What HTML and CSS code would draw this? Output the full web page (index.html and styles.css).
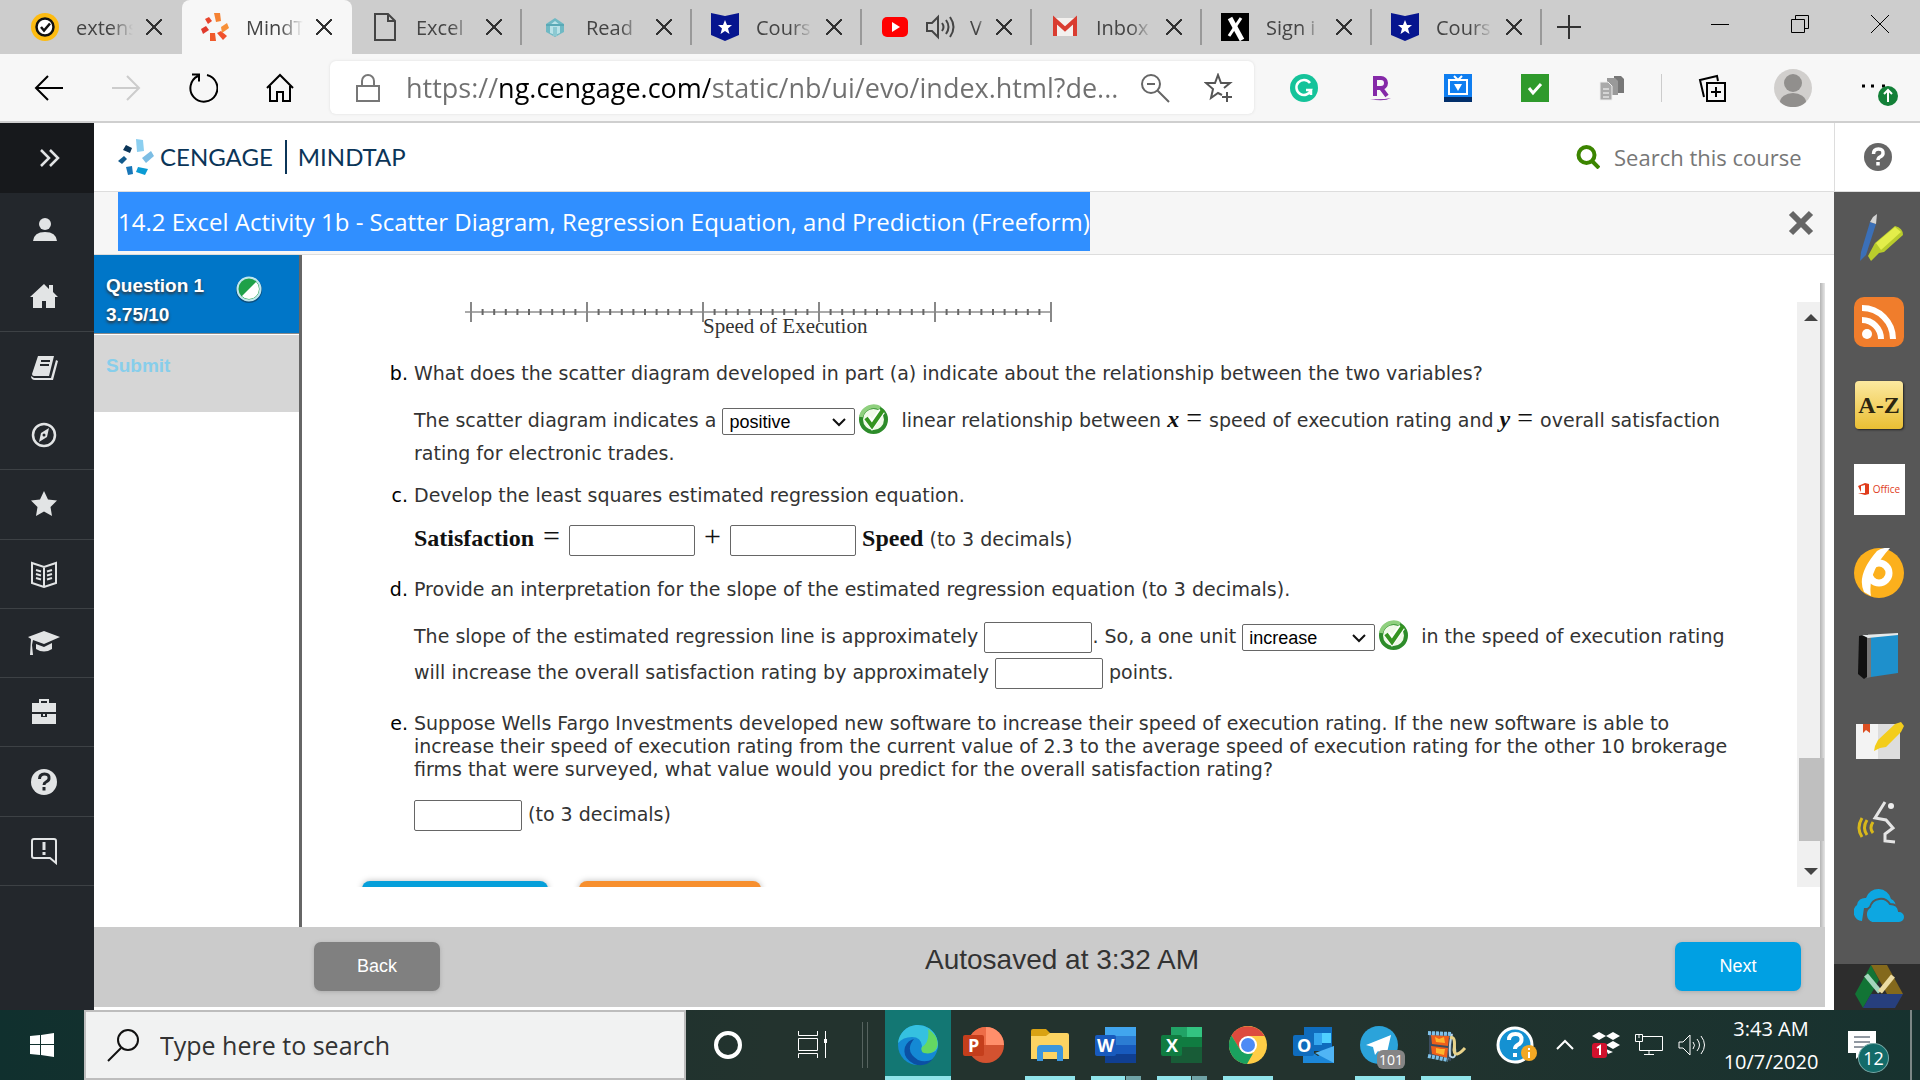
FILE: index.html
```
<!DOCTYPE html>
<html lang="en">

<head>
    <meta charset="utf-8">
    <meta name="viewport" content="width=device-width, initial-scale=1.0">
    <title>MindTap - Cengage Learning</title>
    <link rel="stylesheet" href="styles.css">
</head>

<body>
    <!-- browser tabs -->
    <div class="tabs">
        <div class="tab">
            <svg class="fav" viewBox="0 0 28 28"><circle cx="14" cy="14" r="14" fill="#fdbb11"/><circle cx="14" cy="14" r="8.500" fill="#fff" stroke="#111" stroke-width="2.500"/><path d="M10 14l3 3.500 6-7" fill="none" stroke="#111" stroke-width="2.500"/></svg>
            <span class="name">extens</span><button class="close" aria-label="Close tab"></button>
        </div>
        <div class="tab cur">
            <svg class="fav" viewBox="0 0 28 28"><path fill="#f58233" d="M13 0l6 0 1 8-5 1z"/><path fill="#e8442c" d="M4 6l4-2 3 4-4 3z"/><path fill="#e03a2c" d="M0 16l5-3 3 4-6 4z"/><path fill="#f05a2c" d="M9 20l5 0 1 8-6 0z"/><path fill="#f0502c" d="M16 20l4-2 6 5-4 4z"/><path fill="#f79038" d="M20 14l6-4 2 5-7 5z"/></svg>
            <span class="name">MindT</span><button class="close" aria-label="Close tab"></button>
        </div>
        <div class="tab">
            <svg class="fav" viewBox="0 0 28 28"><path d="M4 1h13l7 7v19H4zM17 1v7h7" fill="none" stroke="#444" stroke-width="2"/></svg>
            <span class="name">Excel</span><button class="close" aria-label="Close tab"></button>
        </div>
        <div class="tab">
            <svg class="fav" viewBox="0 0 28 28"><path fill="#6fb9c4" d="M14 5l9 6v8l-9 5-9-5v-8z"/><path fill="#b9e2e8" d="M14 8l5 4v8l-5 2-5-2v-8z"/><path d="M5 12h18" stroke="#5aa9b6" stroke-width="2"/><path fill="#8cc9d2" d="M12 14h4v9h-4z"/></svg>
            <span class="name">Read</span><button class="close" aria-label="Close tab"></button>
        </div>
        <div class="tab">
            <svg class="fav" viewBox="0 0 28 28"><path fill="#06158f" d="M0 0l14 3 14-3v22l-14 6-14-6z"/><path fill="#fff" d="M14 7l2 5h5l-4 3.500 1.500 5.500-4.500-3-4.500 3 1.500-5.500-4-3.500h5z"/></svg>
            <span class="name">Cours</span><button class="close" aria-label="Close tab"></button>
        </div>
        <div class="tab">
            <svg class="fav" viewBox="0 0 28 28"><rect x="1" y="4" width="26" height="20" rx="5" fill="#f00"/><path fill="#fff" d="M11 9l8 5-8 5z"/></svg>
            <svg class="sound" viewBox="0 0 32 28"><path d="M3 10h5l6-6v20l-6-6H3zM18 10q3 4 0 8M22 7q5 7 0 14M26 4q7 10 0 20" fill="none" stroke="#444" stroke-width="2"/></svg>
            <span class="name short">V</span><button class="close" aria-label="Close tab"></button>
        </div>
        <div class="tab">
            <svg class="fav" viewBox="0 0 28 28"><rect x="2" y="5" width="24" height="18" rx="2" fill="#f3f0ee"/><path d="M4 23V7l10 9L24 7v16" fill="none" stroke="#d93c30" stroke-width="4"/></svg>
            <span class="name">Inbox</span><button class="close" aria-label="Close tab"></button>
        </div>
        <div class="tab">
            <svg class="fav" viewBox="0 0 28 28"><path fill="#000" d="M0 0h28v28H0z"/><path d="M9 5l12 22" stroke="#fff" stroke-width="5"/><path d="M20 5L8 23" stroke="#fff" stroke-width="3"/></svg>
            <span class="name">Sign i</span><button class="close" aria-label="Close tab"></button>
        </div>
        <div class="tab">
            <svg class="fav" viewBox="0 0 28 28"><path fill="#06158f" d="M0 0l14 3 14-3v22l-14 6-14-6z"/><path fill="#fff" d="M14 7l2 5h5l-4 3.500 1.500 5.500-4.500-3-4.500 3 1.500-5.500-4-3.500h5z"/></svg>
            <span class="name">Cours</span><button class="close" aria-label="Close tab"></button>
        </div>
        <button class="plus" aria-label="New tab"><svg width="24" height="24" viewBox="0 0 24 24"><path d="M12 0v24M0 12h24" stroke="#333" stroke-width="2"/></svg></button>
        <div class="win">
            <button aria-label="Minimize"><svg width="20" height="20" viewBox="0 0 20 20"><path d="M1 10.500h18" stroke="#000"/></svg></button>
            <button aria-label="Restore"><svg width="20" height="20" viewBox="0 0 20 20"><path d="M1.500 5.500h13v13h-13zM5.500 5V1.500h13v13H15" fill="none" stroke="#000"/></svg></button>
            <button aria-label="Close"><svg width="20" height="20" viewBox="0 0 20 20"><path d="M1 1l18 18M19 1L1 19" stroke="#000"/></svg></button>
        </div>
    </div>

    <!-- address bar -->
    <div class="toolbar">
        <div class="navs">
            <button aria-label="Back"><svg width="30" height="30" viewBox="0 0 30 30"><path d="M29 15H2M14 3L2 15l12 12" fill="none" stroke="#000" stroke-width="2"/></svg></button>
            <button aria-label="Forward"><svg width="30" height="30" viewBox="0 0 30 30"><path d="M1 15h27M16 3l12 12-12 12" fill="none" stroke="#ccc" stroke-width="2"/></svg></button>
            <button aria-label="Refresh"><svg width="30" height="30" viewBox="0 0 30 30"><path d="M19 2a13.500 13.500 0 1 1-9 1M4 1.500h7v7" fill="none" stroke="#000" stroke-width="2"/></svg></button>
            <button aria-label="Home"><svg width="30" height="30" viewBox="0 0 30 30"><path d="M2 15L15 2l13 13M5 13v15h7v-9h6v9h7V13" fill="none" stroke="#000" stroke-width="2"/></svg></button>
        </div>
        <div class="address">
            <svg width="26" height="30" viewBox="0 0 26 30"><path d="M2 13h22v15H2zM7 13V8a6 6 0 0 1 12 0v5" fill="none" stroke="#777" stroke-width="2"/></svg>
            <input class="url" type="text" aria-label="Address" value="https://ng.cengage.com/static/nb/ui/evo/index.html?de...">
            <svg width="30" height="30" viewBox="0 0 30 30"><circle cx="11" cy="11" r="9" fill="none" stroke="#666" stroke-width="2"/><path d="M17 17l12 12M7 11h8" stroke="#666" stroke-width="2"/></svg>
            <svg width="30" height="30" viewBox="0 0 30 30"><path d="M18 22l-4-2-7 5 2-9-7-6h9l3-8 3 8h9l-6 5M18 24h10M23 19v10" fill="none" stroke="#555" stroke-width="2"/></svg>
        </div>
        <div class="exts">
            <svg viewBox="0 0 28 28"><circle cx="14" cy="14" r="14" fill="#15c39a"/><path d="M20 9a7.500 7.500 0 1 0 1 7h-5M21 21v-5" fill="none" stroke="#fff" stroke-width="2.500"/></svg>
            <svg viewBox="0 0 28 28"><path d="M8 22V4h6a5 5 0 0 1 0 10H8M14 14l6 8" fill="none" stroke="#8529a8" stroke-width="4"/><path fill="#8529a8" d="M3 25q12 1 21-1-7 4-21 1z"/></svg>
            <svg viewBox="0 0 28 28"><path fill="#0f7ef0" d="M0 0h28v28H0z"/><path fill="#022f6b" d="M0 23h28v5H0z"/><path d="M5 6h18v14H5zM10 2l4 4 4-4" fill="none" stroke="#fff" stroke-width="2"/><path fill="#fff" d="M10 10h8l-4 7z"/></svg>
            <svg viewBox="0 0 28 28"><path fill="#2f9a2c" d="M0 0h28v28H0z"/><path d="M8 14l4 5 8-9" fill="none" stroke="#fff" stroke-width="3"/></svg>
            <svg viewBox="0 0 28 28"><path fill="#777" d="M16 2h7l3 3v14H16z"/><path fill="#999" d="M9 4h8l3 3v14H9z"/><path fill="#aaa" stroke="#eee" d="M2 8h8l4 4v14H2z"/><path d="M5 15h6M5 19h6M5 23h6" stroke="#fff"/></svg>
        </div>
        <div class="more">
            <svg width="28" height="28" viewBox="0 0 28 28"><path d="M9 9h18v18H9zM18 13v10M13 18h10M6 23L2 6l17-4 1 5" fill="none" stroke="#000" stroke-width="2"/></svg>
            <svg width="38" height="38" viewBox="0 0 38 38"><circle cx="19" cy="19" r="19" fill="#d1cfcd"/><circle cx="19" cy="14" r="9" fill="#918f8d"/><path fill="#918f8d" d="M6 33a13 9 0 0 1 26 0 19 19 0 0 1-26 0z"/></svg>
            <svg width="38" height="38" viewBox="0 0 38 38"><path d="M2 17h3M11 17h3M22 17h3" stroke="#000" stroke-width="3"/><circle cx="28" cy="27" r="10" fill="#138038"/><path d="M28 33V21M24 25l4-4 4 4" fill="none" stroke="#fff" stroke-width="2"/></svg>
        </div>
    </div>

    <!-- course page -->
    <div class="page">
        <div class="side">
            <button class="open" aria-label="Expand"><svg width="24" height="20" viewBox="0 0 24 20"><path d="M3 2l8 8-8 8M12 2l8 8-8 8" fill="none" stroke="#e2e4e5" stroke-width="2.500"/></svg></button>
            <ul>
                <li class="pair"><svg viewBox="0 0 28 28"><circle cx="15" cy="8" r="6"/><path d="M3 25q1-9 12-9t12 9z"/></svg></li>
                <li><svg viewBox="0 0 28 28"><path d="M0 15L14 2l5 5V3h4v7l5 5h-3v11h-9v-7h-4v7H3V15z"/></svg></li>
                <li class="pair"><svg viewBox="0 0 28 28"><path d="M8 2h16l-5 20H4q-2 0-2-2zM26 6l2 1-5 19H5q-4 0-4-4l3 2h17z"/><path d="M11 7h9M10 11h9" stroke="#23272c" stroke-width="2"/></svg></li>
                <li><svg viewBox="0 0 28 28"><circle cx="14" cy="14" r="11" fill="none" stroke="#e2e4e5" stroke-width="2.500"/><path fill-rule="evenodd" d="M19 7l-2 9-8 5 2-9zM14 12.500a1.500 1.500 0 1 0 0 3 1.500 1.500 0 0 0 0-3z"/></svg></li>
                <li><svg viewBox="0 0 28 28"><path d="M14 1l4 8.500 9 1-6.500 6.500 1.500 9-8-4.500-8 4.500 1.500-9L1 10.500l9-1z"/></svg></li>
                <li><svg viewBox="0 0 28 28"><path d="M2 3l12 4 12-4v20l-12 4-12-4zM14 7v20M6 10l5 1.500M6 14l5 1.500M6 18l5 1.500M22 10l-5 1.500M22 14l-5 1.500M22 18l-5 1.500" fill="none" stroke="#e2e4e5" stroke-width="2"/></svg></li>
                <li><svg viewBox="0 0 34 28"><path d="M17 2l16 6-16 7-11-4-1 5 1 10H3l1-16-3-2zM9 15l8 3 8-4v6q-8 5-16 0z"/></svg></li>
                <li><svg viewBox="0 0 28 28"><path fill-rule="evenodd" d="M9 5V1h10v4h7v9H2V5zm2 0h6V3h-6zM2 16h9v3h6v-3h9v10H2zM13 16h2v2h-2z"/></svg></li>
                <li><svg viewBox="0 0 28 28"><circle cx="14" cy="14" r="13"/><path d="M9.500 11q0-5 5-5t4.500 4.500q0 2-3 3.500-2 1-2 3M14 19v3.500" fill="none" stroke="#23272c" stroke-width="3"/></svg></li>
                <li><svg viewBox="0 0 28 28"><path d="M4 2h20q2 0 2 2v22l-6-5H4q-2 0-2-2V4q0-2 2-2z" fill="none" stroke="#e2e4e5" stroke-width="2"/><path d="M12.500 5h3v8h-3zM12.500 15h3v3h-3z"/></svg></li>
            </ul>
        </div>

        <div class="main">
            <div class="head">
                <svg class="logo" viewBox="0 0 36 36"><path fill="#8ccff0" d="M18 0l7 1 1 11-7 1z"/><path fill="#7cbde4" d="M33 12l3 5-8 7-4-5z"/><path fill="#0a9bd4" d="M20 28l10 2-3 6-9-3z"/><path fill="#1976b8" d="M8 28l6-1 1 8-5 1z"/><path fill="#125a8c" d="M0 22l6-5 3 3-5 5z"/><path fill="#0b3558" d="M8 6l6 3-2 5-7-3z"/></svg>
                <span class="brand">CENGAGE</span><span class="brand product">MINDTAP</span>
                <label class="find">
                    <svg width="24" height="24" viewBox="0 0 24 24"><circle cx="10.500" cy="10" r="8" fill="none" stroke="#3c8500" stroke-width="4"/><path d="M16 16l7 7" stroke="#3c8500" stroke-width="4"/></svg>
                    <input type="text" placeholder="Search this course" aria-label="Search this course">
                </label>
            </div>
            <div class="title">
                <h1>14.2 Excel Activity 1b - Scatter Diagram, Regression Equation, and Prediction (Freeform)</h1>
                <button aria-label="Close activity"><svg width="26" height="26" viewBox="0 0 26 26"><path d="M3 3l20 20M23 3L3 23" stroke="#666" stroke-width="6"/></svg></button>
            </div>
            <div class="work">
                <div class="questions">
                    <div class="q cur"><span>Question 1<br>3.75/10</span><svg width="28" height="28" viewBox="0 0 28 28"><circle cx="14" cy="15" r="13" fill="#0a4f80"/><circle cx="14" cy="14" r="12" fill="#fff"/><path fill="#1fa149" d="M6 22A11.300 11.300 0 1 1 22 6z"/><circle cx="14" cy="14" r="10.500" fill="none" stroke="#1fa149"/><circle cx="14" cy="14" r="11.500" fill="none" stroke="#bfe6ee" stroke-width="2"/></svg></div>
                    <div class="q">Submit</div>
                </div>
                <div class="frame">
                    <div class="scroller">
                        <div class="content">
                            <svg class="axis" viewBox="0 0 590 42" width="590" height="42">
                                <path d="M0 10h586" stroke="#aaa" stroke-width="2"/>
                                <path d="M5 10h580" stroke="#666" stroke-width="6" stroke-dasharray="2 9.600"/>
                                <path d="M6 0v20M122 0v20M238 0v20M354 0v20M470 0v20M586 0v20" stroke="#888" stroke-width="2"/>
                                <text x="238" y="31">Speed of Execution</text>
                            </svg>
                            <ol start="2">
                                <li>
                                    <p>What does the scatter diagram developed in part (a) indicate about the relationship between the two variables?</p>
                                    <p class="fill">The scatter diagram indicates a <select aria-label="Relationship"><option>positive</option><option>negative</option></select><svg class="ok" viewBox="0 0 31 31"><circle cx="15.500" cy="15.500" r="12.500" fill="#f0fae8" stroke="#2d8c2a" stroke-width="4"/><path d="M3 13A13 13 0 0 1 22 4" fill="none" stroke="#8fd07e" stroke-width="4"/><path d="M9 14l5 7L24 7" fill="none" stroke="#fff" stroke-width="7"/><path d="M8 14l6 8L25 6" fill="none" stroke="#34941f" stroke-width="4"/></svg> linear relationship between <i>x</i> <span class="eq">=</span> speed of execution rating and <i>y</i> <span class="eq">=</span> overall satisfaction rating for electronic trades.</p>
                                </li>
                                <li>
                                    <p>Develop the least squares estimated regression equation.</p>
                                    <p class="fill tight"><b>Satisfaction</b> <span class="eq">=</span> <input class="wide" type="text" aria-label="Intercept"> <span class="eq">+</span> <input class="wide" type="text" aria-label="Slope"> <b>Speed</b> (to 3 decimals)</p>
                                </li>
                                <li>
                                    <p>Provide an interpretation for the slope of the estimated regression equation (to 3 decimals).</p>
                                    <p class="fill loose">The slope of the estimated regression line is approximately <input type="text" aria-label="Slope value">. So, a one unit <select aria-label="Direction"><option>increase</option><option>decrease</option></select><svg class="ok" viewBox="0 0 31 31"><circle cx="15.500" cy="15.500" r="12.500" fill="#f0fae8" stroke="#2d8c2a" stroke-width="4"/><path d="M3 13A13 13 0 0 1 22 4" fill="none" stroke="#8fd07e" stroke-width="4"/><path d="M9 14l5 7L24 7" fill="none" stroke="#fff" stroke-width="7"/><path d="M8 14l6 8L25 6" fill="none" stroke="#34941f" stroke-width="4"/></svg> in the speed of execution rating will increase the overall satisfaction rating by approximately <input type="text" aria-label="Points"> points.</p>
                                </li>
                                <li>
                                    <p>Suppose Wells Fargo Investments developed new software to increase their speed of execution rating. If the new software is able to increase their speed of execution rating from the current value of 2.3 to the average speed of execution rating for the other 10 brokerage firms that were surveyed, what value would you predict for the overall satisfaction rating?</p>
                                    <p class="fill loose last"><input type="text" aria-label="Prediction"> (to 3 decimals)</p>
                                </li>
                            </ol>
                            <div class="actions"><button class="blue" aria-label="Hide feedback"></button><button class="orange" aria-label="Icon key"></button></div>
                        </div>
                        <div class="bar"><span class="up"></span><span class="thumb"></span><span class="down"></span></div>
                    </div>
                </div>
            </div>
            <div class="foot">
                <button class="back">Back</button>
                <span>Autosaved at 3:32 AM</span>
                <button class="next">Next</button>
            </div>
        </div>

        <div class="apps">
            <div class="help"><svg width="28" height="28" viewBox="0 0 28 28"><circle cx="14" cy="14" r="14" fill="#666"/><path d="M9.500 11q0-5 5-5t4.500 4.500q0 2-3 3.500-2 1-2 3M14 19v3.500" fill="none" stroke="#fff" stroke-width="3.500"/></svg></div>
            <ul>
                <li><svg viewBox="0 0 50 50"><path fill="#3b70b8" d="M16 9l6 2-10 31-6 6 1-9z"/><path fill="#d5d5d5" d="M19 4l4-3-1 10-6-2z"/><path fill="#b9cc2c" d="M21 30l20-17q8 2 8 9L30 39l-5 1-8 8-3-5z"/><path fill="#e3ee4a" d="M22 30l19-16 6 5-20 18z"/></svg></li>
                <li><svg viewBox="0 0 50 50"><rect width="50" height="50" rx="10" fill="#f07d2c"/><circle cx="13" cy="37" r="5" fill="#fff"/><path d="M8 23a19 19 0 0 1 19 19M8 11a31 31 0 0 1 31 31" fill="none" stroke="#fff" stroke-width="6"/></svg></li>
                <li><div class="az">A-Z</div></li>
                <li><div class="office"><svg width="12" height="12" viewBox="0 0 12 12"><path fill="#e03c1c" fill-rule="evenodd" d="M0 3l7-3 4 1v10l-4 1-7-2 7 0V2L3 3v6z"/></svg>Office</div></li>
                <li><svg viewBox="0 0 50 50"><circle cx="25" cy="25" r="25" fill="#fcb01c"/><path fill="#fff" d="M23 3Q2 27 10 44l7 4Q13 25 36 0q-7-1-13 3z"/><circle cx="25" cy="25" r="10" fill="none" stroke="#fff" stroke-width="7"/></svg></li>
                <li><svg viewBox="0 0 50 50"><path fill="#111" d="M5 4l9-2v42l-4 3-6-5z"/><path fill="#777" d="M13 5h4v40l-4 1z"/><path fill="#1e90cc" d="M17 5l27-3v39l-27 4z"/><path fill="#e5e9ea" d="M8 3l36-2v2L14 6z"/></svg></li>
                <li><svg viewBox="0 0 50 50"><path fill="#f3f3f3" d="M2 8h22v35H2z"/><path fill="#ddd" d="M24 8h22v35H24z"/><path fill="#dc4f22" d="M9 8h7v9l-4-3-3 3z"/><path fill="#f3cd1c" d="M41 8l6-2 3 4-3 6-15 15-6 1-6 3 1-5 3-6z"/></svg></li>
                <li><svg viewBox="0 0 50 50"><path d="M31 3L21 19l11 2 7 8-8 6v7l10 1" fill="none" stroke="#e5e5e5" stroke-width="3"/><circle cx="37" cy="7" r="3" fill="#eee"/><path d="M19 23q-4 6 0 11M13 21q-5 8 0 15M8 19q-6 10 0 19" fill="none" stroke="#d8b81b" stroke-width="3"/></svg></li>
                <li><svg viewBox="0 0 50 50"><path fill="#0da7e1" d="M8 38a9 9 0 0 1-5-16 8 8 0 0 1 9-7 13 13 0 0 1 25 1q5 2 5 9H10z"/><path fill="#0da7e1" stroke="#575757" stroke-width="2" d="M18 40a9 9 0 0 1-2-16 11 11 0 0 1 20-3q8 0 9 7a6 6 0 0 1 0 12z"/></svg></li>
                <li class="dark"><svg viewBox="0 0 50 44"><path fill="#127435" d="M17 0L1 29l8 14 16-28z"/><path fill="#84691c" d="M17 0h16l16 29H33z"/><path fill="#273f7d" d="M17 29h32l-8 14H9z"/><path d="M12 10l14 17" fill="none" stroke="#a5d5bd" stroke-width="5"/><path d="M26 27l13-16" stroke="#ecdca3" stroke-width="5"/></svg></li>
            </ul>
        </div>
    </div>

    <!-- taskbar -->
    <div class="taskbar">
        <button class="start" aria-label="Start"><svg width="24" height="24" viewBox="0 0 24 24"><path fill="#fff" d="M0 3l10-1v9H0zM11 2l13-2v11H11zM0 12h10v10L0 21zM11 12h13v12l-13-2z"/></svg></button>
        <label class="type">
            <svg width="34" height="34" viewBox="0 0 34 34"><circle cx="22" cy="12" r="10" fill="none" stroke="#111" stroke-width="2"/><path d="M15 20L2 33" stroke="#111" stroke-width="2"/></svg>
            <input type="text" placeholder="Type here to search" aria-label="Type here to search">
        </label>
        <div class="cell big"><svg width="30" height="30" viewBox="0 0 30 30"><circle cx="15" cy="15" r="12" fill="none" stroke="#fff" stroke-width="4"/></svg></div>
        <div class="cell big"><svg width="30" height="30" viewBox="0 0 30 30"><path d="M1.500 1v4.500h19V1M1.500 8.500h19v12h-19zM1.500 28v-4.500h19V28M28.500 1v27" fill="none" stroke="#fff"/><path fill="#fff" d="M27 9h3v4h-3z"/></svg></div>
        <div class="split"></div>
        <div class="cell on run"><svg width="42" height="42" viewBox="0 0 42 42"><circle cx="21" cy="21" r="20" fill="#1489d4"/><path fill="#35c1e0" d="M1 19A20 20 0 0 1 40 15q4 13-8 14-9 0-7-7-1-9-10-9-9 0-14 6z"/><path fill="#64d862" d="M31 5q12 8 9 18-3 8-13 6-4-2-2-6 8-5 6-18z"/><path fill="#0b50a4" d="M17 15q-10 12 4 21 8 3 15-1-8 9-19 5-12-6-9-17 3-7 9-8z"/></svg></div>
        <div class="cell"><svg width="42" height="42" viewBox="0 0 42 42"><circle cx="23" cy="21" r="18" fill="#d35230"/><path fill="#ff8f6b" d="M23 3a18 18 0 0 1 18 18H23z"/><path fill="#ed6c47" d="M23 3v18H5A18 18 0 0 1 23 3z"/><rect x="0" y="11" width="21" height="21" rx="2" fill="#c43e1c"/><text x="5" y="28">P</text></svg></div>
        <div class="cell run"><svg width="42" height="42" viewBox="0 0 42 42"><path fill="#d9a213" d="M2 7q0-2 2-2h13l4 4v6H2z"/><path fill="#fcd462" d="M2 12h15l4-3h17q2 0 2 2v24H2z"/><path fill="#3b96dd" d="M8 37V25q0-4 4-4h18q4 0 4 4v12h-6v-9H14v9z"/></svg></div>
        <div class="cell run many"><svg width="42" height="42" viewBox="0 0 42 42"><path fill="#41a5ee" d="M10 3h31v9H10z"/><path fill="#2b7cd3" d="M10 12h31v9H10z"/><path fill="#185abd" d="M10 21h31v9H10z"/><path fill="#103f91" d="M10 30h31v9H10z"/><rect x="0" y="11" width="21" height="21" rx="2" fill="#185abd"/><text x="2" y="28">W</text></svg></div>
        <div class="cell run many"><svg width="42" height="42" viewBox="0 0 42 42"><path fill="#21a366" d="M10 3h16v10H10z"/><path fill="#33c481" d="M26 3h15v10H26z"/><path fill="#107c41" d="M10 13h31v10H10z"/><path fill="#185c37" d="M10 23h31v16H10z"/><rect x="0" y="11" width="21" height="21" rx="2" fill="#107c41"/><text x="5" y="28">X</text></svg></div>
        <div class="cell run"><svg width="42" height="42" viewBox="0 0 42 42"><circle cx="21" cy="21" r="19" fill="#ffcd46"/><path fill="#dd4b3e" d="M4.500 11.500A19 19 0 0 1 37.500 12H21l-8 14z"/><path fill="#1aa15f" d="M4.500 11.500l8.500 14q4 5 13 4l-6 10.500A19 19 0 0 1 4.500 11.500z"/><circle cx="21" cy="21" r="9" fill="#fff"/><circle cx="21" cy="21" r="7" fill="#4c8bf5"/></svg></div>
        <div class="cell"><svg width="42" height="42" viewBox="0 0 42 42"><path fill="#0f6cbd" d="M11 3h28v24H11z"/><path fill="#35a7ef" d="M21 9h8v12h-8z"/><path fill="#4fd0ff" d="M29 9h9v10h-9z"/><path fill="#1c87d8" d="M10 22l15 10 16-10v17H10z"/><path fill="#50b5f5" d="M41 22v17L22 29z"/><rect x="0" y="11" width="21" height="21" rx="2" fill="#0f6cbd"/><text x="4" y="28">O</text></svg></div>
        <div class="cell run"><svg width="42" height="42" viewBox="0 0 42 42"><circle cx="20" cy="21" r="19" fill="#2ba3da"/><path fill="#fff" d="M7 21l25-10-5 22-8-6-3 4-2-8z"/></svg><span class="count">101</span></div>
        <div class="cell run"><svg width="42" height="42" viewBox="0 0 42 42"><path fill="#3b4c60" d="M4 8l24 1-2 28-22-5z"/><path fill="#ee5f1a" d="M6 11l18 1-1 10-16-2zM6 22l17 2-1 10-15-4z"/><path fill="#ffb52e" d="M10 13l4 2 5-2 1 6-9-1zM11 24l5 1 4 0-1 6-8-2z"/><path d="M3 9l23 1M3 32l20 4" stroke="#7fc1e8" stroke-width="4" stroke-dasharray="3 1"/><path d="M27 10q-3 10-2 22 8 6 4-14" fill="none" stroke="#bcd8ea" stroke-width="2"/><path d="M25 14q6-3 4 12 1 9 11-2" fill="none" stroke="#e9d38a" stroke-width="3"/></svg></div>
        <div class="tray">
            <svg width="42" height="40" viewBox="0 0 42 40"><circle cx="19" cy="20" r="17" fill="#1591d2" stroke="#fff" stroke-width="3"/><path d="M13 15q0-6 6.500-6t6 6q0 3-4 5-2.500 1.500-2.500 4M19 28v4" fill="none" stroke="#fff" stroke-width="4"/><circle cx="33" cy="28" r="8" fill="#f3a823"/><path d="M33 23v2M33 27v6" stroke="#fff" stroke-width="2"/></svg>
            <svg width="24" height="12" viewBox="0 0 24 12"><path d="M4 10l8-8 8 8" fill="none" stroke="#fff" stroke-width="2"/></svg>
            <svg width="28" height="28" viewBox="0 0 28 28"><path fill="#fff" d="M7 1l7 4-7 4-7-4zM21 1l7 4-7 4-7-4zM21 10l7 4-7 4-7-4zM14 18l7 3-5 2z"/><rect y="12" width="15" height="15" rx="3" fill="#d1112d"/><path d="M5 17l3-2v9" fill="none" stroke="#fff" stroke-width="2"/></svg>
            <svg width="28" height="24" viewBox="0 0 28 24"><path d="M7.500 3.500h20v14h-23V9M14 17v4M9 21.500h10M.5 1.500h7v7h-7zM4 2v3" fill="none" stroke="#fff"/></svg>
            <svg width="28" height="24" viewBox="0 0 28 24"><path d="M1 9h4l7-7v20l-7-7H1zM15 9q3 3 0 7M19 6q5 6 0 12M23 3q7 9 0 18" fill="none" stroke="#fff"/></svg>
            <div class="clock">3:43 AM<br>10/7/2020</div>
            <div class="notes"><svg width="28" height="28" viewBox="0 0 28 28"><path fill="#fff" d="M0 0h28v22H14l-6 6v-6H0z"/><path d="M6 6h16M6 11h16M6 16h10" stroke="#234" stroke-width="1"/></svg><span>12</span></div>
        </div>
    </div>
</body>

</html>
```
FILE: styles.css
```
* {
    padding: 0;
    margin: 0;
    box-sizing: border-box;
    list-style: none;
}

body {
    display: flex;
    flex-direction: column;
    height: 100vh;
    overflow: hidden;
    font-family: "Open Sans", "Noto Sans", sans-serif;
    background: #fff;
}

button {
    border: 0;
    background: none;
}

input,
button,
select {
    font-family: inherit;
}

svg {
    display: block;
    flex: none;
}

/* tabs */
.tabs {
    display: flex;
    height: 54px;
    padding-left: 12px;
    background: #cdcdcd;
}

.tab {
    display: flex;
    align-items: center;
    width: 170px;
    padding: 0 18px 0 19px;
    border-right: 2px solid #999;
    border-image: linear-gradient(transparent 10px, #999 10px, #999 44px, transparent 44px) 1;
}

.tab:first-child {
    border-color: transparent;
    border-image: none;
}

.tab.cur {
    background: #f7f7f7;
    padding-right: 20px;
    border: 0;
    border-radius: 8px 8px 0 0;
}

.fav {
    width: 28px;
    height: 28px;
}

.sound {
    width: 32px;
    height: 28px;
    margin-left: 15px;
}

.name {
    flex: 1;
    min-width: 0;
    margin: 0 13px 0 17px;
    white-space: nowrap;
    font-size: 20px;
    color: #444;
    -webkit-mask-image: linear-gradient(90deg, #000 60%, transparent);
    mask-image: linear-gradient(90deg, #000 60%, transparent);
}

.name.short {
    margin-left: 14px;
    margin-right: 12px;
}

.close {
    width: 16px;
    height: 16px;
    background: linear-gradient(45deg, transparent 46%, #333 46%, #333 54%, transparent 54%), linear-gradient(-45deg, transparent 46%, #333 46%, #333 54%, transparent 54%);
}

.plus {
    width: 54px;
    display: flex;
    align-items: center;
    justify-content: center;
}

.win {
    display: flex;
    margin-left: auto;
    height: 48px;
}

.win button {
    display: flex;
    align-items: center;
    justify-content: center;
    width: 80px;
}

/* toolbar */
.toolbar {
    display: flex;
    align-items: center;
    height: 69px;
    background: #f7f7f7;
    border-bottom: 2px solid #cfcfcf;
}

.navs {
    display: flex;
    gap: 47px;
    padding-left: 34px;
}

.address {
    display: flex;
    align-items: center;
    flex: 1;
    gap: 34px;
    height: 53px;
    margin-left: 35px;
    padding: 0 20px 0 25px;
    background: #fff;
    border-radius: 6px;
    box-shadow: 0 0 3px #ddd;
}

.url {
    flex: 1;
    min-width: 0;
    border: 0;
    margin: 0 -16px 0 -9px;
    font-size: 27px;
    color: transparent;
    background: linear-gradient(90deg, #707070 94px, #000 94px, #000 304px, #707070 304px);
    -webkit-background-clip: text;
    background-clip: text;
}

.exts {
    display: flex;
    gap: 49px;
    padding: 0 35px 0 36px;
    border-right: 1px solid #ccc;
}

.exts svg {
    width: 28px;
    height: 28px;
}

.more {
    display: flex;
    align-items: center;
    gap: 48px;
    padding: 0 22px 0 36px;
}

/* page */
.page {
    display: flex;
    flex: 1;
    min-height: 0;
}

.side {
    width: 94px;
    background: #23272c;
}

.open {
    display: flex;
    align-items: center;
    justify-content: center;
    width: 100%;
    height: 70px;
    padding-left: 6px;
    background: #17191c;
}

.side ul {
    display: grid;
    grid-auto-rows: 1fr;
    height: 693px;
}

.side li {
    display: flex;
    align-items: center;
    justify-content: center;
    padding-right: 6px;
    border-bottom: 1px solid #3d4145;
}

.side .pair {
    padding-top: 5px;
    border-color: transparent;
}

.side li svg {
    height: 28px;
    fill: #e2e4e5;
}

.main {
    display: flex;
    flex-direction: column;
    flex: 1;
    min-width: 0;
    padding-bottom: 3px;
}

.head {
    display: flex;
    align-items: center;
    height: 69px;
    padding: 0 30px 0 24px;
    border-bottom: 1px solid #ddd;
}

.logo {
    width: 36px;
    height: 36px;
}

.brand {
    margin-left: 6px;
    padding-right: 12px;
    font-family: Lato, sans-serif;
    font-size: 24px;
    line-height: 34px;
    color: #0b3558;
}

.product {
    margin: 0;
    padding-left: 11px;
    border-left: 2px solid #0b3558;
}

.find {
    display: flex;
    align-items: center;
    gap: 14px;
    margin-left: auto;
}

.find input {
    width: 190px;
    border: 0;
    font-size: 22px;
}

.find input::placeholder {
    color: #777;
}

.title {
    display: flex;
    align-items: center;
    justify-content: space-between;
    height: 63px;
    padding: 0 20px 0 24px;
    background: #f6f6f6;
    border-bottom: 1px solid #ddd;
}

.title h1 {
    align-self: flex-start;
    font-size: 24px;
    font-weight: normal;
    line-height: 59px;
    white-space: nowrap;
    color: #fff;
    background: #308fff;
}

.work {
    display: flex;
    flex: 1;
    min-height: 0;
}

.questions {
    width: 208px;
    border-right: 3px solid #666;
}

.q {
    display: flex;
    justify-content: space-between;
    height: 77px;
    padding: 16px 36px 0 12px;
    font: bold 19px/29px "Liberation Sans", Arial, sans-serif;
    color: #87ceeb;
    background: #d6d6d6;
}

.q.cur {
    height: 79px;
    margin-bottom: 1px;
    color: #fff;
    background: #0076c8;
    border-bottom: 1px solid #8a8a8a;
    text-shadow: 0 2px 3px #333;
}

.q svg {
    margin-top: 4px;
}

.frame {
    flex: 1;
    min-width: 0;
    margin-right: 9px;
    padding: 47px 0 40px;
    background: linear-gradient(90deg, #b4b4b4, #e6e6e6) right bottom / 5px calc(100% - 28px) no-repeat;
}

.scroller {
    display: flex;
    height: 100%;
    overflow: hidden;
}

.content {
    flex: 1;
    padding-right: 54px;
    overflow: hidden;
    font: 19px/23px "DejaVu Sans", Verdana, sans-serif;
    color: #333;
}

.axis {
    margin-left: 163px;
}

.axis text {
    font: 21px "Liberation Serif", serif;
    fill: #333;
}

.content ol {
    padding-left: 112px;
    margin-top: 18px;
}

.content ol li {
    list-style: lower-alpha;
    margin-bottom: 19px;
}

.content li::marker {
    color: #000;
}

.fill {
    margin-top: 19px;
    margin-bottom: -5px;
    line-height: 33px;
}

.tight {
    margin-top: 15px;
    margin-bottom: 0;
    padding-bottom: 2px;
    line-height: 35px;
}

.loose {
    margin-top: 17px;
    margin-bottom: 0;
    padding-bottom: 3px;
    line-height: 36px;
}

.last {
    margin-top: 15px;
}

.content input {
    width: 108px;
    height: 31px;
    vertical-align: middle;
    border: 1px solid #666;
    border-radius: 2px;
}

.content .wide {
    width: 126px;
}

.content select {
    width: 133px;
    height: 27px;
    padding-left: 6px;
    vertical-align: middle;
    appearance: none;
    border: 1px solid #666;
    border-radius: 2px;
    background: #fff url("data:image/svg+xml,%3Csvg xmlns='http://www.w3.org/2000/svg' width='16' height='10'%3E%3Cpath d='M2 2l6 6 6-6' fill='none' stroke='%23111' stroke-width='2'/%3E%3C/svg%3E") right 7px center no-repeat;
    font: 18px "Liberation Sans", Arial, sans-serif;
    color: #000;
}

.ok {
    display: inline-block;
    width: 31px;
    height: 31px;
    margin: -4px 6px 0 3px;
    vertical-align: middle;
}

.content b,
.content i {
    font: bold 24px/23px "Liberation Serif", serif;
    color: #111;
}

.content i {
    font-style: italic;
}

.eq {
    margin: 0 1px;
    font-family: "Liberation Serif", serif;
    font-size: 28px;
    line-height: 23px;
    color: #111;
}

.tight .eq {
    margin: 0 3px;
    font-size: 30px;
}

.actions {
    display: flex;
    gap: 31px;
    margin: 46px 0 0 60px;
}

.actions button {
    width: 186px;
    height: 48px;
    border-radius: 8px;
    box-shadow: 0 0 6px #bbb;
}

.actions .blue {
    background: #069fda;
}

.actions .orange {
    width: 182px;
    background: #f78f2e;
}

.bar {
    display: flex;
    flex-direction: column;
    align-items: center;
    width: 28px;
    padding: 12px 0;
    background: linear-gradient(90deg, #f0f0f0 23px, #b4b4b4 23px, #e6e6e6);
}

.up,
.down {
    border: 7px solid transparent;
    border-top: 0;
    border-bottom: 7px solid #444;
}

.down {
    border-bottom: 0;
    border-top: 7px solid #444;
}

.thumb {
    width: 25px;
    height: 83px;
    margin: auto 0 27px;
    background: #bfbfbf;
}

.foot {
    display: flex;
    justify-content: space-between;
    height: 80px;
    margin-right: 9px;
    padding: 15px 24px 0 220px;
    background: #cbcbcb;
    font: 28px/36px "Liberation Sans", Arial, sans-serif;
    color: #333;
}

.foot span {
    padding-left: 9px;
}

.foot button {
    width: 126px;
    height: 49px;
    border-radius: 7px;
    font-size: 18px;
    color: #fff;
    box-shadow: 0 1px 4px #aaa;
}

.foot .back {
    background: #808080;
}

.foot .next {
    background: #00a0e3;
}

/* right apps */
.apps {
    display: flex;
    flex-direction: column;
    width: 86px;
    background: #575757;
}

.help {
    display: flex;
    align-items: center;
    justify-content: center;
    height: 69px;
    background: #fff;
    border: 1px solid #ddd;
    border-width: 0 0 1px 1px;
}

.apps ul {
    display: flex;
    flex-direction: column;
    flex: 1;
    min-height: 0;
    padding-top: 4px;
    overflow: hidden;
}

.apps li {
    display: flex;
    align-items: center;
    justify-content: center;
    flex: 1;
    min-height: 0;
    padding-left: 4px;
}

.apps li svg {
    width: 50px;
}

.apps .dark {
    flex: none;
    height: 46px;
    margin-top: 14px;
    background: #2d2d2d;
}

.az {
    width: 48px;
    height: 48px;
    border-radius: 4px;
    background: linear-gradient(#fce9a0, #eabf33);
    box-shadow: 1px 1px 2px #222;
    font: bold 24px/48px "Liberation Serif", serif;
    text-align: center;
    color: #2c2610;
}

.apps .office {
    display: flex;
    align-items: center;
    justify-content: center;
    gap: 3px;
    width: 51px;
    height: 51px;
    background: #fff;
    font-size: 10px;
    color: #e03c1c;
}

.apps .office svg {
    width: 12px;
}

/* taskbar */
.taskbar {
    display: flex;
    height: 70px;
    background: linear-gradient(90deg, #10302e, #23332e 40%, #23332e 70%, #17322f);
    color: #fff;
}

.start {
    display: flex;
    align-items: center;
    justify-content: center;
    width: 84px;
}

.type {
    display: flex;
    align-items: center;
    gap: 20px;
    width: 602px;
    padding-left: 20px;
    background: #f1f2f2;
    border: 2px solid #bdbdbd;
}

.type input {
    border: 0;
    background: none;
    font-size: 25px;
}

.type input::placeholder {
    color: #333;
}

.cell {
    display: flex;
    align-items: center;
    justify-content: center;
    position: relative;
    width: 66px;
}

.cell.big {
    width: 84px;
}

.cell text {
    font: bold 18px "Open Sans", sans-serif;
    fill: #fff;
}

.split {
    width: 6px;
    height: 46px;
    margin: 12px 17px 0 8px;
    border: 1px solid #56635f;
    border-width: 0 1px;
}

.cell.on {
    background: #137773;
}

.run::after {
    content: "";
    position: absolute;
    left: 8px;
    right: 8px;
    bottom: 0;
    height: 4px;
    background: #90e4ea;
}

.on::after {
    left: 0;
    right: 0;
}

.many::after {
    background: linear-gradient(90deg, #90e4ea 34px, #23332e 34px, #23332e 35px, #6fa3a6 35px);
}

.count {
    position: absolute;
    right: 8px;
    bottom: 11px;
    padding: 0 2px;
    border-radius: 6px;
    background: #858585;
    font-size: 14px;
    line-height: 19px;
}

.tray {
    display: flex;
    align-items: center;
    gap: 15px;
    margin-left: auto;
    margin-right: 8px;
    padding-right: 34px;
    border-right: 2px solid #7c8886;
}

.clock {
    width: 100px;
    font-size: 20px;
    line-height: 33px;
    text-align: center;
}

.notes {
    position: relative;
    margin-left: 12px;
}

.notes span {
    position: absolute;
    left: 10px;
    top: 12px;
    width: 31px;
    border: 1px solid #79aaa8;
    border-radius: 50%;
    background: #136b69;
    font-size: 18px;
    line-height: 28px;
    text-align: center;
}
```
